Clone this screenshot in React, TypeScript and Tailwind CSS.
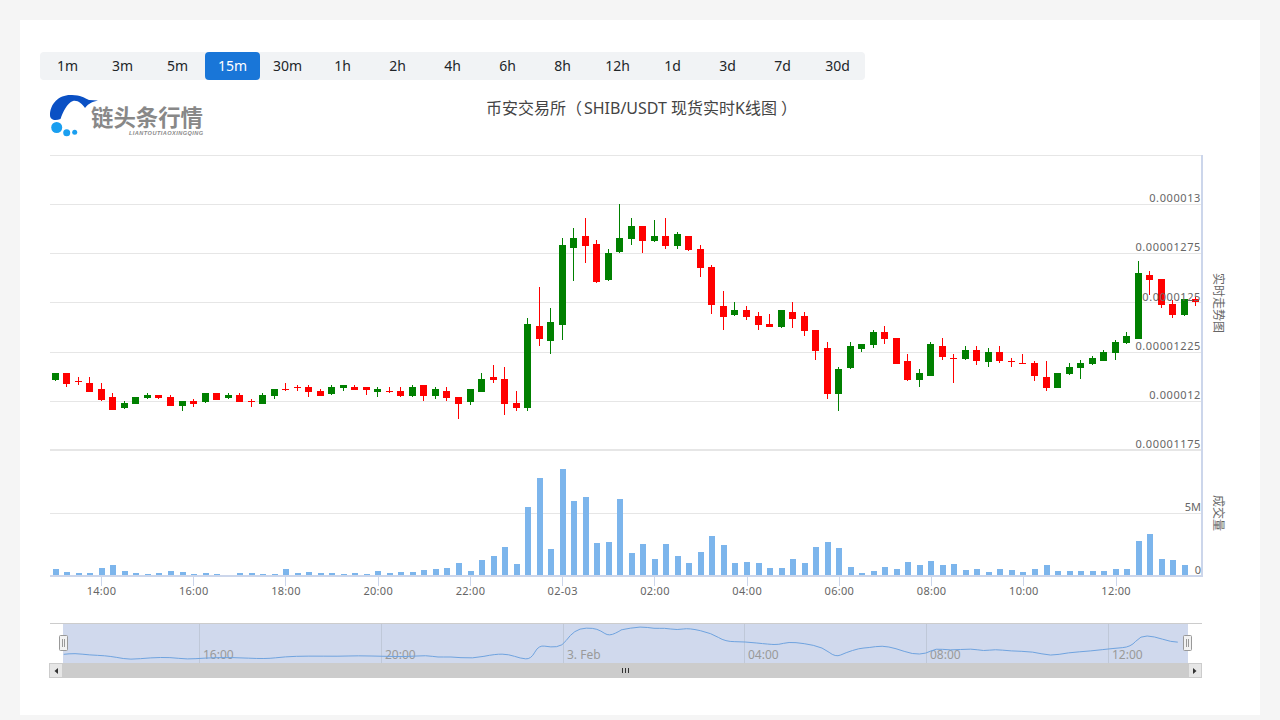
const intervals = ["1m", "3m", "5m", "15m", "30m", "1h", "2h", "4h", "6h", "8h", "12h", "1d", "3d", "7d", "30d"];

// [up, high, bodyTop, bodyBottom, low] in chart pixels
const candles: [number, number, number, number, number][] = [
  [1, 373, 373, 380, 381], [0, 373, 373, 384, 387], [0, 377, 381, 382, 385], [0, 377, 383, 392, 392],
  [0, 383, 389, 400, 401], [0, 393, 397, 410, 410], [1, 401, 403, 408, 409], [1, 397, 397, 404, 404],
  [1, 393, 395, 398, 399], [0, 395, 395, 398, 399], [0, 395, 397, 406, 406], [1, 401, 401, 406, 411],
  [0, 399, 401, 404, 407], [1, 393, 393, 402, 403], [0, 393, 393, 400, 400], [1, 393, 395, 398, 399],
  [0, 393, 395, 402, 402], [0, 399, 401, 402, 407], [1, 393, 395, 404, 404], [1, 389, 389, 396, 399],
  [0, 383, 389, 390, 391], [0, 385, 387, 388, 391], [0, 385, 387, 392, 397], [0, 389, 391, 396, 396],
  [1, 385, 387, 394, 395], [1, 385, 385, 388, 391], [0, 385, 387, 390, 390], [0, 387, 387, 390, 395],
  [1, 387, 389, 392, 397], [0, 387, 391, 392, 393], [0, 387, 391, 396, 397], [1, 385, 387, 396, 397],
  [0, 385, 385, 396, 401], [1, 387, 389, 396, 399], [0, 387, 391, 398, 401], [0, 397, 397, 404, 419],
  [1, 389, 389, 402, 405], [1, 373, 379, 392, 392], [0, 365, 377, 380, 383], [0, 367, 379, 404, 415],
  [0, 391, 403, 408, 411], [1, 318, 324, 408, 411], [0, 287, 326, 339, 346], [1, 308, 322, 341, 354],
  [1, 238, 245, 325, 340], [1, 228, 238, 248, 281], [0, 218, 236, 246, 263], [0, 240, 244, 282, 283],
  [1, 249, 253, 280, 281], [1, 204, 238, 252, 253], [1, 218, 226, 239, 245], [0, 226, 226, 241, 253],
  [1, 220, 236, 241, 242], [0, 218, 236, 246, 249], [1, 232, 234, 246, 249], [0, 236, 236, 250, 251],
  [0, 245, 249, 268, 277], [0, 265, 267, 305, 314], [0, 291, 306, 317, 330], [1, 302, 310, 315, 316],
  [0, 306, 310, 317, 320], [0, 312, 316, 325, 330], [0, 314, 324, 327, 327], [1, 310, 310, 327, 328],
  [0, 302, 312, 319, 328], [0, 312, 316, 331, 336], [0, 330, 330, 351, 360], [0, 342, 348, 394, 399],
  [1, 367, 369, 394, 411], [1, 342, 346, 368, 369], [1, 344, 344, 349, 352], [1, 330, 332, 345, 348],
  [0, 326, 332, 339, 344], [0, 338, 338, 364, 364], [0, 354, 361, 380, 381], [1, 369, 373, 380, 387],
  [1, 342, 344, 376, 376], [0, 338, 346, 357, 360], [0, 354, 358, 359, 383], [1, 346, 350, 359, 360],
  [0, 346, 350, 361, 365], [1, 348, 352, 362, 367], [0, 346, 352, 361, 363], [0, 358, 361, 362, 367],
  [0, 354, 363, 364, 364], [0, 361, 363, 376, 381], [0, 361, 377, 388, 391], [1, 373, 373, 388, 388],
  [1, 363, 367, 374, 375], [1, 360, 363, 368, 379], [1, 356, 358, 364, 365], [1, 350, 352, 361, 361],
  [1, 340, 342, 353, 360], [1, 332, 336, 343, 344], [1, 261, 273, 339, 339], [0, 271, 275, 280, 295],
  [0, 279, 279, 305, 308], [0, 300, 304, 315, 318], [1, 299, 299, 315, 316], [0, 297, 299, 302, 306],
];

// top of each volume bar, page pixels
const volumeTops = [
  569, 572, 573, 573, 568, 565, 571, 573, 574, 573, 571, 572, 574, 573, 574, 575, 573, 573, 574, 574,
  569, 573, 572, 573, 573, 574, 573, 574, 571, 573, 572, 572, 570, 569, 568, 563, 571, 560, 556, 547,
  564, 507, 478, 549, 469, 501, 497, 543, 542, 499, 553, 544, 559, 544, 556, 563, 552, 536, 545, 563,
  562, 563, 568, 568, 559, 563, 547, 542, 548, 567, 573, 571, 567, 569, 562, 565, 561, 565, 564, 570,
  569, 572, 569, 570, 572, 569, 565, 571, 571, 571, 571, 571, 569, 569, 541, 534, 559, 560, 565, 575,
];

const navLeft: [number, number][] = [
  [62, 118], [90, 115], [130, 120], [170, 122], [200, 127], [235, 134], [290, 128], [340, 127], [385, 133],
  [430, 129], [500, 127], [590, 132], [640, 125], [700, 123], [780, 124], [830, 122], [900, 124], [960, 125],
  [1010, 121], [1040, 127], [1070, 125], [1130, 131], [1190, 117], [1225, 118], [1255, 130], [1283, 133],
  [1303, 90], [1335, 97], [1365, 93], [1385, 60], [1410, 40], [1445, 39], [1465, 47], [1487, 64], [1520, 45],
];
const navRight: [number, number][] = [
  [0, 45], [55, 34], [90, 41], [115, 39], [150, 45], [180, 39], [240, 55], [275, 80], [325, 80], [390, 88],
  [415, 89], [440, 81], [480, 85], [530, 97], [563, 127], [590, 113], [625, 100], [650, 98], [685, 92],
  [720, 100], [765, 118], [800, 116], [825, 100], [860, 106], [920, 101], [950, 108], [980, 103], [1020, 108],
  [1080, 110], [1125, 123], [1170, 113], [1230, 108], [1290, 100], [1335, 96], [1360, 62], [1395, 64],
  [1440, 81], [1475, 82],
];

const navPoints = [
  ...navLeft.map(([x, y]) => [40 + x / 2.613, 615 + y / 3]),
  ...navRight.map(([x, y]) => [620 + x / 2.613, 615 + y / 3]),
];

const navPath = navPoints
  .map(([x, y], i) => {
    if (i === 0) return `M${x} ${y}`;
    const [px, py] = navPoints[i - 1];
    return `Q${px} ${py} ${(px + x) / 2} ${(py + y) / 2}`;
  })
  .join(" ");

const candleX = (i: number) => Math.round(54.8 + 11.52 * i);

const priceLabels: [string, number][] = [
  ["0.000013", 202], ["0.00001275", 251], ["0.0000125", 301], ["0.00001225", 350], ["0.000012", 399], ["0.00001175", 448],
];
const gridLines = [155, 204, 253, 302, 352, 401, 450, 513];
const timeLabels = ["14:00", "16:00", "18:00", "20:00", "22:00", "02-03", "02:00", "04:00", "06:00", "08:00", "10:00", "12:00"];
const navLabels: [string, number, number][] = [
  ["16:00", 199, 203], ["20:00", 381, 385], ["3. Feb", 563, 567], ["04:00", 744, 748], ["08:00", 926, 930], ["12:00", 1108, 1112],
];

function Logo() {
  return (
    <svg width="160" height="46" viewBox="48 92 160 46" className="block">
      <path d="M50 115C50 103 60 94 72 95C80 95 85 98 89 100L98 100.5C93 101.5 89 103 85 108C82 104 78 100 73 101C67 103 63 112 60.5 119C55 121 50 120 50 115Z" fill="#0a50c4" />
      <circle cx="56.7" cy="127.5" r="5.5" fill="#1a9ff0" />
      <circle cx="66.7" cy="132.7" r="3.5" fill="#1a9ff0" />
      <circle cx="74.7" cy="132.3" r="2.5" fill="#1a9ff0" />
      <text x="91" y="126" fill="#888888" fontSize="22.4" fontWeight="700" fontFamily="'Noto Sans CJK SC', sans-serif">链头条行情</text>
      <text x="129" y="135" fill="#8a8a8a" fontSize="5.6" fontWeight="700" fontStyle="italic" letterSpacing="0.45" fontFamily="'Liberation Sans', sans-serif">LIANTOUTIAOXINGQING</text>
    </svg>
  );
}

function Chart() {
  return (
    <svg width="1200" height="560" viewBox="40 140 1200 560" className="block" style={{ fontFamily: "'Noto Sans', 'Noto Sans CJK SC', sans-serif" }}>
      {gridLines.map((y) => (
        <rect key={y} x="50" y={y} width="1151" height="1" fill="#e6e6e6" />
      ))}
      <rect x="50" y="449" width="1151" height="1" fill="#e6e6e6" />

      {candles.map(([up, high, top, bottom, low], i) => {
        const x = candleX(i);
        const color = up ? "#008000" : "#ff0000";
        return (
          <g key={i} fill={color}>
            <rect x={x} y={high} width="1" height={low - high} />
            <rect x={x - 3} y={top} width="7" height={bottom - top} />
          </g>
        );
      })}

      {volumeTops.map((top, i) => (
        <rect key={i} x={candleX(i) - 2} y={top} width="6" height={576 - top} fill="#7cb5ec" />
      ))}

      <rect x="1201" y="155" width="2" height="421" fill="#ccd6eb" />
      <rect x="50" y="575" width="1153" height="2" fill="#ccd6eb" />

      {timeLabels.map((label, i) => {
        const x = 101 + 92.24 * i;
        return (
          <g key={label}>
            <rect x={Math.round(x)} y="576" width="1" height="10" fill="#ccd6eb" />
            <text x={x + 0.5} y="595" textAnchor="middle" fontSize="11" letterSpacing="0.3" fill="#666">{label}</text>
          </g>
        );
      })}

      {priceLabels.map(([label, y]) => (
        <text key={label} x="1201" y={y} textAnchor="end" fontSize="11" letterSpacing="0.6" fill="#666">{label}</text>
      ))}
      <text x="1201" y="511" textAnchor="end" fontSize="11" fill="#666">5M</text>
      <text x="1201" y="574" textAnchor="end" fontSize="11" fill="#666">0</text>

      <text transform="translate(1214 303) rotate(90)" textAnchor="middle" fontSize="12" fill="#666">实时走势图</text>
      <text transform="translate(1214 513) rotate(90)" textAnchor="middle" fontSize="12" fill="#666">成交量</text>

      {/* navigator */}
      <rect x="50" y="623" width="1152" height="1" fill="#cccccc" />
      <rect x="63" y="624" width="1125" height="39" fill="#d0d9ed" />
      {navLabels.map(([label, lineX, textX]) => (
        <g key={label}>
          <rect x={lineX} y="624" width="1" height="39" fill="#bfc8d8" />
          <text x={textX} y="659" fontSize="12" fill="#999">{label}</text>
        </g>
      ))}
      <path d={navPath} fill="none" stroke="#6fa3df" strokeWidth="1" />

      {[59, 1183].map((x) => (
        <g key={x}>
          <rect x={x + 0.5} y="635.5" width="8" height="15" rx="1" fill="#f2f2f2" stroke="#999" />
          <rect x={x + 3} y="639" width="1" height="8" fill="#999" />
          <rect x={x + 5} y="639" width="1" height="8" fill="#999" />
        </g>
      ))}

      {/* scrollbar */}
      <rect x="50" y="663" width="1152" height="15" fill="#cccccc" />
      <rect x="49.5" y="663.5" width="13" height="14" fill="#e6e6e6" stroke="#cccccc" />
      <rect x="1188.5" y="663.5" width="13" height="14" fill="#e6e6e6" stroke="#cccccc" />
      <path d="M58 668L58 674L54.5 671Z" fill="#333" />
      <path d="M1193 668L1193 674L1196.5 671Z" fill="#333" />
      <rect x="622" y="668" width="1" height="5" fill="#333" />
      <rect x="625" y="668" width="1" height="5" fill="#333" />
      <rect x="628" y="668" width="1" height="5" fill="#333" />
    </svg>
  );
}

export default function App() {
  return (
    <div className="h-[720px] overflow-hidden bg-[#f5f5f5] px-5 pt-5">
      <div className="h-[695px] bg-white px-5 pt-8">
        <div className="flex w-[825px] rounded-sm bg-[#f1f3f5]" style={{ fontFamily: "'Noto Sans', sans-serif" }}>
          {intervals.map((item) => (
            <div
              key={item}
              className={
                item === "15m"
                  ? "flex h-7 w-[55px] items-center justify-center rounded-sm bg-[#1976d8] text-sm text-white"
                  : "flex h-7 w-[55px] items-center justify-center text-sm text-[#212529]"
              }
            >
              {item}
            </div>
          ))}
        </div>
        <div className="relative h-[60px]">
          <div className="absolute left-2 top-3">
            <Logo />
          </div>
          <h1
            className="pl-[3px] pt-[17px] text-center text-base leading-[22px] text-[#444]"
            style={{ fontFamily: "'Noto Sans', 'Noto Sans CJK SC', sans-serif" }}
          >
            币安交易所（<span className="ml-[2px]">SHIB/USDT</span> 现货实时K线图<span className="ml-[4px]">）</span>
          </h1>
        </div>
        <Chart />
      </div>
    </div>
  );
}
